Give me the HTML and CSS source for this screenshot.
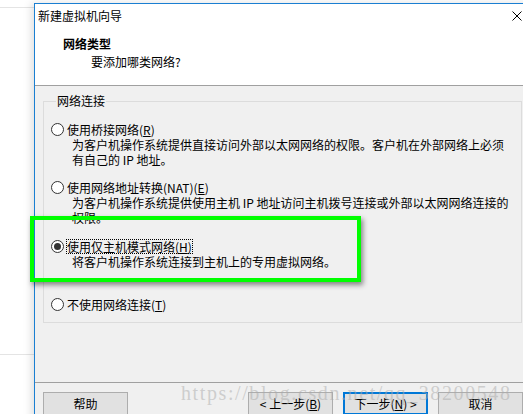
FILE: index.html
```html
<!DOCTYPE html>
<html lang="zh-CN">
<head>
    <meta charset="UTF-8">
    <meta name="viewport" content="width=device-width, initial-scale=1.0">
    <title>新建虚拟机向导</title>
    <link rel="stylesheet" href="styles.css">
</head>
<body>
    <div class="screen">
        <div class="backdrop">
            <div class="rule rule-top"></div>
            <div class="rule rule-bottom"></div>
        </div>

        <div class="dialog">
            <div class="dialog-top">
                <div class="titlebar">
                    <span class="title">新建虚拟机向导</span>
                    <svg class="close" width="10" height="10" viewBox="0 0 10 10">
                        <path d="M0.5 0.5 L9.5 9.5 M9.5 0.5 L0.5 9.5" stroke="#000" stroke-width="1" fill="none"/>
                    </svg>
                </div>
                <div class="header">
                    <div class="header-title">网络类型</div>
                    <div class="header-sub">要添加哪类网络?</div>
                </div>
            </div>

            <div class="dialog-body">
                <fieldset class="group">
                    <legend>网络连接</legend>

                    <div class="option">
                        <div class="option-label">
                            <span class="radio"></span>
                            <span class="label-text">使用桥接网络(<u>R</u>)</span>
                        </div>
                        <div class="option-desc">为客户机操作系统提供直接访问外部以太网网络的权限。客户机在外部网络上必须<br>有自己的 IP 地址。</div>
                    </div>

                    <div class="option option-2">
                        <div class="option-label">
                            <span class="radio"></span>
                            <span class="label-text">使用网络地址转换(NAT)(<u>E</u>)</span>
                        </div>
                        <div class="option-desc">为客户机操作系统提供使用主机 IP 地址访问主机拨号连接或外部以太网网络连接的<br>权限。</div>
                    </div>

                    <div class="option option-3">
                        <div class="option-label">
                            <span class="radio checked"></span>
                            <span class="label-text focused">使用仅主机模式网络(<u>H</u>)</span>
                        </div>
                        <div class="option-desc">将客户机操作系统连接到主机上的专用虚拟网络。</div>
                    </div>

                    <div class="option option-4">
                        <div class="option-label">
                            <span class="radio"></span>
                            <span class="label-text">不使用网络连接(<u>T</u>)</span>
                        </div>
                    </div>
                </fieldset>
            </div>

            <div class="dialog-buttons">
                <button class="btn">帮助</button>
                <div class="btn-group">
                    <button class="btn">&lt; 上一步(<u>B</u>)</button>
                    <button class="btn btn-default">下一步(<u>N</u>) &gt;</button>
                    <button class="btn">取消</button>
                </div>
            </div>
        </div>

        <!-- 标注框 -->
        <div class="highlight"></div>
        <div class="watermark">https://blog.csdn.net/qq_38200548</div>
    </div>
</body>
</html>
```

FILE: styles.css
```css
:root {
    --win-blue: #1a7fd2;
    --dialog-gray: #f0f0f0;
    --line-gray: #a0a0a0;
    --group-border: #dcdcdc;
    --btn-bg: #e1e1e1;
    --btn-border: #adadad;
    --focus-blue: #0078d7;
    --mark-green: #00ff00;
}

* {
    margin: 0;
    padding: 0;
    box-sizing: border-box;
}

body {
    background-color: #ffffff;
    font-family: "Noto Sans CJK SC", "Liberation Sans", sans-serif;
    font-size: 12px;
    line-height: 15px;
    color: #000;
    overflow: hidden;
}

.screen {
    position: relative;
    display: flex;
    width: 523px;
    height: 414px;
    overflow: hidden;
}

.backdrop {
    flex: none;
    width: 34px;
    padding-top: 7px;
}

.rule {
    height: 1px;
    background-color: #e4e4e4;
}

.rule-bottom {
    margin-top: 346px;
}

.dialog {
    flex: none;
    width: 497px;
    height: 420px;
    margin-top: 3px;
    background-color: var(--dialog-gray);
    border-top: 1px solid var(--win-blue);
    border-left: 1px solid var(--win-blue);
    box-shadow: -3px 0 8px rgba(0, 0, 0, 0.12);
}

.dialog-top {
    background-color: #ffffff;
    border-bottom: 1px solid var(--line-gray);
    padding-bottom: 16px;
}

.titlebar {
    display: flex;
    justify-content: space-between;
    padding: 4px 9px 0 3px;
}

.close {
    display: block;
    margin-top: 3px;
}

.header {
    padding-top: 13px;
}

.header-title {
    padding-left: 28px;
    font-weight: bold;
}

.header-sub {
    margin-top: 3px;
    padding-left: 56px;
}

.dialog-body {
    height: 297px;
    padding: 8px 9px 0 8px;
    border-bottom: 1px solid var(--line-gray);
}

.group {
    border: 1px solid var(--group-border);
    padding: 14px 0 10px 7px;
}

.group legend {
    margin-left: 5px;
    padding: 0 1px;
    line-height: 14px;
}

.option-2 {
    margin-top: 13px;
}

.option-3 {
    margin-top: 14px;
}

.option-4 {
    margin-top: 28px;
}

.option-label {
    display: flex;
    align-items: center;
    height: 15px;
}

.radio {
    position: relative;
    flex: none;
    width: 13px;
    height: 13px;
    border: 1px solid #333;
    border-radius: 50%;
    background-color: #fff;
}

.radio.checked::after {
    content: "";
    position: absolute;
    left: 2px;
    top: 2px;
    width: 7px;
    height: 7px;
    border-radius: 50%;
    background-color: #333;
}

.label-text {
    margin-left: 2px;
    line-height: 13px;
    border: 1px solid transparent;
    white-space: nowrap;
}

.label-text.focused {
    border: 1px dotted #000;
}

.option-desc {
    padding-left: 21px;
    white-space: nowrap;
}

.dialog-buttons {
    display: flex;
    justify-content: space-between;
    padding: 9px 8px 0 8px;
}

.btn-group {
    display: flex;
    gap: 10px;
}

.btn {
    width: 85px;
    height: 23px;
    font-family: inherit;
    font-size: 12px;
    color: #000;
    background-color: var(--btn-bg);
    border: 1px solid var(--btn-border);
}

.btn-default {
    border: 2px solid var(--focus-blue);
}

.highlight {
    position: absolute;
    left: 30px;
    top: 216px;
    width: 331px;
    height: 66px;
    border: 4px solid var(--mark-green);
    box-shadow: 2px 3px 5px rgba(0, 0, 0, 0.45);
}

.watermark {
    position: absolute;
    left: 181px;
    top: 383px;
    font-family: "Liberation Serif", serif;
    font-size: 20px;
    line-height: 20px;
    letter-spacing: 1.6px;
    color: rgba(170, 170, 170, 0.5);
    white-space: nowrap;
}
```
